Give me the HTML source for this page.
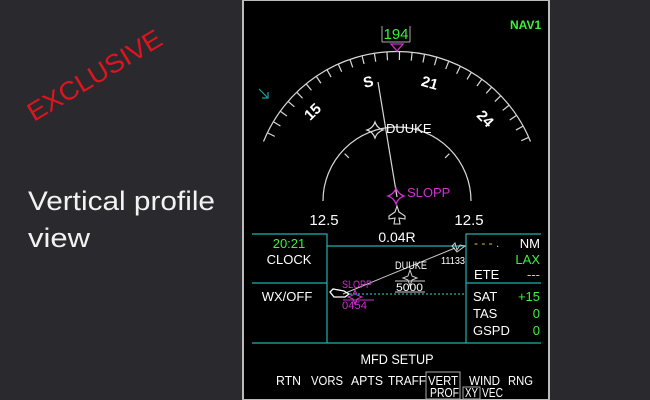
<!DOCTYPE html>
<html><head><meta charset="utf-8"><style>
html,body{margin:0;padding:0;width:650px;height:400px;overflow:hidden;background:#2a2a2e;}
svg{position:absolute;left:0;top:0}
text{font-family:"Liberation Sans",sans-serif;}
</style></head><body>
<svg width="650" height="400" viewBox="0 0 650 400">
<rect x="0" y="0" width="650" height="400" fill="#2a2a2e"/>
<text x="34" y="122" fill="#e0141e" font-size="26" textLength="152" lengthAdjust="spacingAndGlyphs" transform="rotate(-31 34 122)">EXCLUSIVE</text>
<text x="28" y="210" fill="#f2f2f2" font-size="27" textLength="187" lengthAdjust="spacingAndGlyphs">Vertical profile</text>
<text x="28" y="247" fill="#f2f2f2" font-size="27" textLength="62" lengthAdjust="spacingAndGlyphs">view</text>
<rect x="243" y="0" width="306" height="400" fill="#000" stroke="#bbb" stroke-width="2"/>
<g fill="none" stroke="#d8d8d8" stroke-width="1.2">
<path d="M263.5 141.5 A144 144 0 0 1 530.5 141.5"/>
<path d="M323 201 A74 74 0 0 1 471 201"/>
</g>
<g stroke="#d8d8d8" stroke-width="1.2">
<line x1="397" y1="52" x2="397" y2="60" transform="rotate(-64 397 196)"/>
<line x1="397" y1="52" x2="397" y2="60" transform="rotate(-59 397 196)"/>
<line x1="397" y1="52" x2="397" y2="60" transform="rotate(-54 397 196)"/>
<line x1="397" y1="52" x2="397" y2="60" transform="rotate(-49 397 196)"/>
<line x1="397" y1="52" x2="397" y2="60" transform="rotate(-44 397 196)"/>
<line x1="397" y1="52" x2="397" y2="60" transform="rotate(-39 397 196)"/>
<line x1="397" y1="52" x2="397" y2="60" transform="rotate(-34 397 196)"/>
<line x1="397" y1="52" x2="397" y2="60" transform="rotate(-29 397 196)"/>
<line x1="397" y1="52" x2="397" y2="60" transform="rotate(-24 397 196)"/>
<line x1="397" y1="52" x2="397" y2="60" transform="rotate(-19 397 196)"/>
<line x1="397" y1="52" x2="397" y2="60" transform="rotate(-14 397 196)"/>
<line x1="397" y1="52" x2="397" y2="60" transform="rotate(-9 397 196)"/>
<line x1="397" y1="52" x2="397" y2="60" transform="rotate(-4 397 196)"/>
<line x1="397" y1="52" x2="397" y2="60" transform="rotate(1 397 196)"/>
<line x1="397" y1="52" x2="397" y2="60" transform="rotate(6 397 196)"/>
<line x1="397" y1="52" x2="397" y2="60" transform="rotate(11 397 196)"/>
<line x1="397" y1="52" x2="397" y2="60" transform="rotate(16 397 196)"/>
<line x1="397" y1="52" x2="397" y2="60" transform="rotate(21 397 196)"/>
<line x1="397" y1="52" x2="397" y2="60" transform="rotate(26 397 196)"/>
<line x1="397" y1="52" x2="397" y2="60" transform="rotate(31 397 196)"/>
<line x1="397" y1="52" x2="397" y2="60" transform="rotate(36 397 196)"/>
<line x1="397" y1="52" x2="397" y2="60" transform="rotate(41 397 196)"/>
<line x1="397" y1="52" x2="397" y2="60" transform="rotate(46 397 196)"/>
<line x1="397" y1="52" x2="397" y2="60" transform="rotate(51 397 196)"/>
<line x1="397" y1="52" x2="397" y2="60" transform="rotate(56 397 196)"/>
<line x1="397" y1="52" x2="397" y2="60" transform="rotate(61 397 196)"/>
<line x1="397" y1="52" x2="397" y2="60" transform="rotate(66 397 196)"/>
<line x1="397" y1="132" x2="397" y2="138" transform="rotate(-45 397 206)"/>
<line x1="397" y1="132" x2="397" y2="138" transform="rotate(45 397 206)"/>
<line x1="378" y1="82" x2="397" y2="197"/>
</g>
<g fill="#fff" font-size="15" font-weight="bold" text-anchor="middle">
<text x="368" y="87" transform="rotate(-14 368 81)">S</text>
<text x="430" y="88" transform="rotate(16 430 82)">21</text>
<text x="312" y="117" transform="rotate(-44 312 111)">15</text>
<text x="486" y="124" transform="rotate(46 486 118)">24</text>
</g>
<path d="M382 42 V26 M410 26 V42 M382 42 H410" fill="none" stroke="#aaa" stroke-width="1"/>
<text x="396" y="39" fill="#3cf03c" font-size="15" text-anchor="middle">194</text>
<path d="M391 44 L403 44 L397 51 Z" fill="none" stroke="#d030d0" stroke-width="1.3"/>
<text x="510" y="29" fill="#3cf03c" font-size="12" font-weight="bold">NAV1</text>
<path d="M259 89 L268 98 M268 92 V98 H262" fill="none" stroke="#20a0a0" stroke-width="1.2"/>
<path d="M375 122 Q377 128 383 130 Q377 132 375 138 Q373 132 367 130 Q373 128 375 122Z" fill="none" stroke="#ddd" stroke-width="1.2"/>
<text x="386" y="133" fill="#fff" font-size="13">DUUKE</text>
<path d="M396 188 Q398 194 404 196 Q398 198 396 204 Q394 198 388 196 Q394 194 396 188Z" fill="none" stroke="#d030d0" stroke-width="1.3"/>
<text x="407" y="197" fill="#d030d0" font-size="13">SLOPP</text>
<path d="M397 206 L399 212 L405 216 L405 219 L399 218 L400 224 L394 224 L395 218 L389 219 L389 216 L395 212 Z" fill="none" stroke="#ddd" stroke-width="1.1"/>
<g fill="#fff" font-size="15" text-anchor="middle">
<text x="324" y="225">12.5</text>
<text x="469" y="225">12.5</text>
<text x="397" y="242" font-size="14">0.04R</text>
</g>
<g stroke="#20b0b0" stroke-width="1.2" fill="none">
<path d="M252 234 H327 V343 M466 343 V234 H541 M327 246 H466 M252 283 H327 M466 283 H541 M252 343 H541"/>
<path d="M350 294 H466" stroke-dasharray="2 2"/>
</g>
<text x="289" y="248" fill="#3cf03c" font-size="13" text-anchor="middle">20:21</text>
<text x="289" y="264" fill="#fff" font-size="13" text-anchor="middle">CLOCK</text>
<text x="287" y="301" fill="#fff" font-size="13" text-anchor="middle">WX/OFF</text>
<text x="474" y="247" fill="#e8d040" font-size="12">- - - .</text>
<text x="540" y="248" fill="#fff" font-size="13" text-anchor="end">NM</text>
<text x="540" y="264" fill="#3cf03c" font-size="13" text-anchor="end">LAX</text>
<text x="474" y="279" fill="#fff" font-size="13">ETE</text>
<text x="540" y="279" fill="#e8d040" font-size="13" text-anchor="end">---</text>
<g fill="#fff" font-size="13"><text x="473" y="301">SAT</text><text x="473" y="318">TAS</text><text x="473" y="335">GSPD</text></g>
<g fill="#3cf03c" font-size="13" text-anchor="end"><text x="540" y="301">+15</text><text x="540" y="318">0</text><text x="540" y="335">0</text></g>
<line x1="343" y1="294" x2="455" y2="248" stroke="#ccc" stroke-width="1"/>
<path d="M333 289 L330 292 L334 297 L345 297 L349 294 L344 291 Z" fill="none" stroke="#fff" stroke-width="1.3"/>
<path d="M455 243 L457 250 L460 245 L465 246 L457 252 L452 246Z" fill="none" stroke="#ccc" stroke-width="1"/>
<text x="441" y="264" fill="#fff" font-size="10" textLength="24" lengthAdjust="spacingAndGlyphs">11133</text>
<text x="395" y="269" fill="#fff" font-size="11" textLength="32" lengthAdjust="spacingAndGlyphs">DUUKE</text>
<path d="M410 270 L412 276 L417 278 L412 280 L410 286 L408 280 L403 278 L408 276Z" fill="none" stroke="#ccc" stroke-width="1"/>
<path d="M395 281 H425 M395 292 H425" stroke="#ccc" stroke-width="1"/>
<text x="396" y="291" fill="#fff" font-size="11" textLength="27" lengthAdjust="spacingAndGlyphs">5000</text>
<text x="342" y="288" fill="#d030d0" font-size="11" textLength="30" lengthAdjust="spacingAndGlyphs">SLOPP</text>
<path d="M343 300 H374" stroke="#d030d0" stroke-width="1"/>
<path d="M355 290 L357 295 L362 297 L357 299 L355 304 L353 299 L348 297 L353 295Z" fill="none" stroke="#d030d0" stroke-width="1"/>
<text x="342" y="309" fill="#d030d0" font-size="11" textLength="25" lengthAdjust="spacingAndGlyphs">0454</text>
<text x="397" y="364" fill="#fff" font-size="14" text-anchor="middle" textLength="73" lengthAdjust="spacingAndGlyphs">MFD SETUP</text>
<g fill="#fff" font-size="13">
<text x="276" y="385" textLength="25" lengthAdjust="spacingAndGlyphs">RTN</text>
<text x="311" y="385" textLength="32" lengthAdjust="spacingAndGlyphs">VORS</text>
<text x="351" y="385" textLength="32" lengthAdjust="spacingAndGlyphs">APTS</text>
<text x="388" y="385" textLength="38" lengthAdjust="spacingAndGlyphs">TRAFF</text>
<text x="428" y="385" textLength="30" lengthAdjust="spacingAndGlyphs">VERT</text>
<text x="430" y="397" textLength="29" lengthAdjust="spacingAndGlyphs">PROF</text>
<text x="469" y="385" textLength="31" lengthAdjust="spacingAndGlyphs">WIND</text>
<text x="508" y="385" textLength="25" lengthAdjust="spacingAndGlyphs">RNG</text>
<text x="465" y="397" textLength="13" lengthAdjust="spacingAndGlyphs">XY</text>
<text x="482" y="397" textLength="21" lengthAdjust="spacingAndGlyphs">VEC</text>
</g>
<rect x="426" y="372" width="34" height="27" fill="none" stroke="#aaa" stroke-width="1"/>
<rect x="463" y="387" width="17" height="12" fill="none" stroke="#aaa" stroke-width="1"/>
</svg>
</body></html>
